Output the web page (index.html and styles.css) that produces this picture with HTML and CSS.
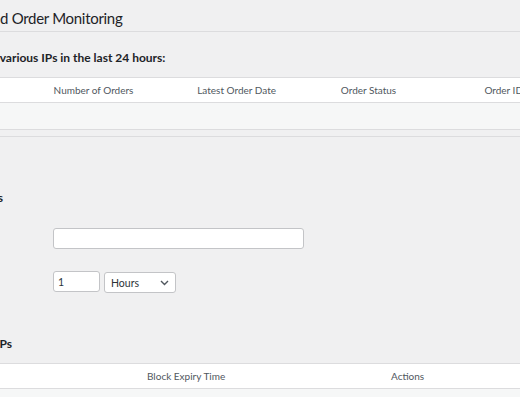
FILE: index.html
```html
<!DOCTYPE html>
<html lang="en">
  <head>
    <meta charset="UTF-8" />
    <meta name="viewport" content="width=device-width, initial-scale=1.0" />
    <title>Fraud Order Monitoring</title>
    <link rel="stylesheet" href="styles.css">
  </head>
  <body>
    <div class="wrap">
      <h1 class="page-title"><span class="lead lead-title">IP Address Base</span>d Order Monitoring</h1>

      <h2 class="section-title"><span class="lead lead-orders">Orders from</span> various IPs in the last 24 hours:</h2>
      <table class="list-table">
        <thead>
          <tr>
            <th>IP Address</th>
            <th>Number of Orders</th>
            <th>Latest Order Date</th>
            <th>Order Status</th>
            <th>Order ID</th>
          </tr>
        </thead>
        <tbody>
          <tr><td colspan="5"></td></tr>
        </tbody>
      </table>
      <div class="table-foot"></div>

      <h2 class="section-title settings-title"><span class="lead lead-settings">Block Settings</span></h2>
      <div class="form-table">
        <div class="form-row">
          <label class="form-label">IP Address</label>
          <div class="form-field"><input class="text-input" type="text"></div>
        </div>
        <div class="form-row">
          <label class="form-label">Block Duration</label>
          <div class="form-field">
            <input class="num-input" type="text" value="1">
            <div class="select-box">
              <span>Hours</span>
              <svg width="9" height="6" viewBox="0 0 9 6"><path d="M1 1l3.5 3.5L8 1" fill="none" stroke="#50575e" stroke-width="1.4"/></svg>
            </div>
          </div>
        </div>
      </div>

      <h2 class="section-title blocked-title"><span class="lead lead-blocked">Blocked IPs</span></h2>
      <table class="list-table table-blocked">
        <thead>
          <tr>
            <th>IP Address</th>
            <th>Block Expiry Time</th>
            <th>Actions</th>
          </tr>
        </thead>
        <tbody>
          <tr><td colspan="3"></td></tr>
        </tbody>
      </table>
    </div>
  </body>
</html>
```

FILE: styles.css
```css
body {
  margin: 0;
  background-color: #f0f0f1;
  overflow: hidden;
  font-family: Lato, "Open Sans", sans-serif;
  color: #1d2327;
}

/* the screenshot is a crop, the left side of the page sits off screen */
.wrap {
  margin-left: -100px;
  width: 718px;
}

/* first words of a heading, pinned so their end meets the crop edge */
.lead {
  display: inline-flex;
  justify-content: flex-end;
  white-space: nowrap;
}

.lead-title {
  width: 100px;
}

.lead-orders {
  width: 97px;
}

.lead-settings {
  width: 103px;
}

.lead-blocked {
  width: 112px;
}

.page-title {
  margin: 0;
  padding: 6px 0 1px;
  font-size: 15px;
  font-weight: 400;
  letter-spacing: -0.3px;
  line-height: 24px;
  border-bottom: 1px solid #dcdcde;
  white-space: nowrap;
}

.section-title {
  margin: 16px 0 9px;
  font-size: 12px;
  font-weight: 700;
  line-height: 20px;
  white-space: nowrap;
}

.list-table {
  width: 100%;
  table-layout: fixed;
  border-collapse: collapse;
  border-top: 1px solid #dcdcde;
  border-bottom: 1px solid #dcdcde;
}

.table-blocked {
  width: 732px;
  margin-left: -7px;
}

.list-table th {
  height: 24px;
  padding: 0 10px;
  background-color: #fff;
  border-bottom: 1px solid #dcdcde;
  font-size: 10px;
  font-weight: 400;
  color: #50575e;
  text-align: left;
}

.list-table td {
  height: 26px;
  padding: 0;
  background-color: #f6f7f7;
}

.table-foot {
  margin-top: 6px;
  border-top: 1px solid #dcdcde;
}

.settings-title {
  margin-top: 51px;
  margin-bottom: 20px;
}

.form-row {
  display: flex;
  align-items: flex-start;
}

.form-row + .form-row {
  margin-top: 22px;
}

.form-label {
  width: 153px;
  flex-shrink: 0;
  font-size: 11px;
  visibility: hidden;
}

.form-field {
  display: flex;
  align-items: flex-start;
  gap: 4px;
}

.text-input,
.num-input,
.select-box {
  box-sizing: border-box;
  height: 21px;
  margin: 0;
  border: 1px solid #c3c4c7;
  border-radius: 3px;
  background-color: #fff;
  font-family: inherit;
  font-size: 10.5px;
  color: #2c3338;
}

.text-input {
  width: 251px;
}

.num-input {
  width: 47px;
  padding: 0 4px;
}

.select-box {
  width: 72px;
  margin-top: 1px;
  padding: 0 6px;
  display: flex;
  align-items: center;
  justify-content: space-between;
}

.blocked-title {
  margin-top: 41px;
}
```
